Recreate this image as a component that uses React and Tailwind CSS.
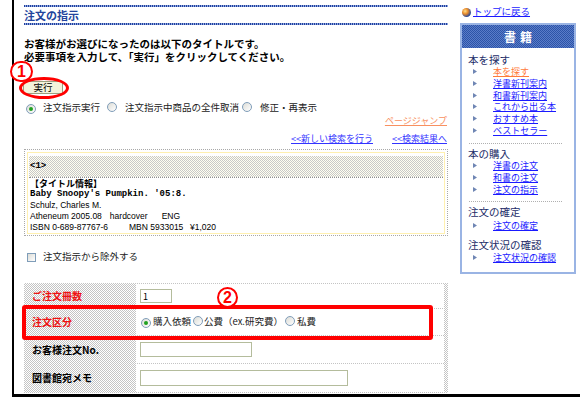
import React from 'react';

// 注文の指示 画面（書籍サイドメニュー付き）

const Radio = ({ checked }) => (
  <span className="inline-flex h-[10px] w-[10px] shrink-0 items-center justify-center rounded-full border border-[#7f9db9] bg-[linear-gradient(135deg,#dcdcd6,#ffffff)]">
    {checked && <span className="h-[4px] w-[4px] rounded-full bg-[#21a121]" />}
  </span>
);

const Bullet = () => (
  <svg width="4" height="5" viewBox="0 0 4 5" className="ml-[5px] shrink-0">
    <polygon points="0,0 4,2.5 0,5" fill="#6f86b4" />
  </svg>
);

const SideLink = ({ children, current }) => (
  <div className="flex h-[11.7px] items-center">
    <Bullet />
    <span className={`ml-[16px] text-[9px] leading-none underline ${current ? 'text-[#ff7a3a]' : 'text-[#1a1aff]'}`}>
      {children}
    </span>
  </div>
);

const SideHead = ({ children, className = '' }) => (
  <div className={`flex h-[11px] items-center text-[10.5px] leading-none ${className}`}>{children}</div>
);

const BlueRule = () => (
  <div className="h-[2px] bg-[image:repeating-linear-gradient(90deg,#1f3f9f_0_1px,#8fa6dc_1px_2px)]" />
);

const FormRow = ({ label, red, height, children }) => (
  <>
    <div className={`flex items-center pl-[7px] text-[10px] font-bold leading-none ${red ? 'text-[#ee1111]' : 'text-black'}`} style={{ height }}>
      {label}
    </div>
    <div className="flex items-center bg-white pl-[4px]">{children}</div>
  </>
);

export default function App() {
  return (
    <div className="relative h-[397px] w-[580px] overflow-hidden bg-white pl-[12px] font-['Noto_Sans_CJK_JP',sans-serif] text-black">
      <div className="flex h-full border-b-[3px] border-l-2 border-black">
        {/* メイン */}
        <main className="w-[438px] shrink-0 pl-[10px] pr-[4px] pt-[5px]">
          <BlueRule />
          <div className="flex h-[16px] items-center text-[11px] font-bold leading-none text-[#23449c]">注文の指示</div>
          <BlueRule />

          <div className="mt-[13px] text-[10.5px] font-bold leading-none">
            <div className="flex h-[13px] items-center">お客様がお選びになったのは以下のタイトルです。</div>
            <div className="flex h-[13px] items-center">必要事項を入力して、「実行」をクリックしてください。</div>
          </div>

          <button className="ml-[-1px] mt-[17px] flex h-[13px] w-[40px] items-center justify-center border border-[#9aa080] bg-[#f3f3dc] text-[9.5px] leading-none">
            実行
          </button>

          <div className="mt-[8px] flex h-[12px] items-center text-[9.5px] leading-none text-[#222]">
            <span className="ml-[2px]"><Radio checked /></span>
            <span className="ml-[7px]">注文指示実行</span>
            <span className="ml-[7px]"><Radio /></span>
            <span className="ml-[8px]">注文指示中商品の全件取消</span>
            <span className="ml-[3px]"><Radio /></span>
            <span className="ml-[8px]">修正・再表示</span>
          </div>

          <div className="flex h-[12px] items-center justify-end pr-[1px] text-[9px] leading-none text-[#f89060] underline">
            ページジャンプ
          </div>

          <div className="mt-[6px] flex h-[12px] items-center justify-end gap-[19px] pr-[1px] text-[9px] leading-none text-[#3333ff] underline">
            <span>&lt;&lt;新しい検索を行う</span>
            <span>&lt;&lt;検索結果へ</span>
          </div>

          {/* タイトル情報 */}
          <div className="mt-[5px] border border-dotted border-[#a8a8a8] p-[2px] pb-[1px]">
            <div className="border border-[#fff0b0] px-[1px] pt-[3px]">
              <div className="flex h-[21px] items-center bg-[image:repeating-conic-gradient(#c8c8c8_0_25%,#fffff0_0_50%)] bg-[length:2px_2px] pl-[1px] font-['Liberation_Mono',monospace] text-[9px] font-bold">
                &lt;1&gt;
              </div>
              <div className="border-t border-dotted border-[#909090] pl-[1px] leading-[11px]">
                <div className="text-[9px] font-bold">【タイトル情報】</div>
                <div className="font-['Liberation_Mono',monospace] text-[9px] font-bold">Baby Snoopy's Pumpkin. '05:8.</div>
                <div className="font-['Liberation_Sans',sans-serif] text-[8.5px]">Schulz, Charles M.</div>
                <div className="flex font-['Liberation_Sans',sans-serif] text-[8.5px]">
                  <span>Atheneum 2005.08</span>
                  <span className="ml-[8px]">hardcover</span>
                  <span className="ml-[14px]">ENG</span>
                </div>
                <div className="flex font-['Liberation_Sans',sans-serif] text-[8.5px]">
                  <span className="w-[99px]">ISBN 0-689-87767-6</span>
                  <span className="w-[61px]">MBN 5933015</span>
                  <span>¥1,020</span>
                </div>
              </div>
            </div>
          </div>

          <div className="mt-[15px] flex h-[12px] items-center text-[9.5px] leading-none text-[#222]">
            <span className="ml-[3px] h-[9px] w-[9px] border border-[#7f9db9] bg-[linear-gradient(135deg,#dcdcd6,#ffffff)]" />
            <span className="ml-[7px]">注文指示から除外する</span>
          </div>

          {/* 注文フォーム */}
          <div className="mt-[20px] bg-[image:repeating-conic-gradient(#c4c4c4_0_25%,#ffffff_0_50%)] bg-[length:2px_2px] p-[1px] pr-[4px]">
            <div className="grid grid-cols-[110px_1fr] gap-[1px]">
              <FormRow label="ご注文冊数" red height={24}>
                <div className="flex h-[14px] w-[32px] items-center border border-[#b4bc9c] pl-[2px] text-[9px] leading-none">1</div>
              </FormRow>
              <FormRow label="注文区分" red height={26}>
                <div className="flex items-center text-[9.5px] leading-none text-[#222]">
                  <span className="ml-[1px]"><Radio checked /></span>
                  <span className="ml-[2px]">購入依頼</span>
                  <span className="ml-[2px]"><Radio /></span>
                  <span className="ml-[1px]">公費（ex.研究費）</span>
                  <span className="ml-[2px]"><Radio /></span>
                  <span className="ml-[2px]">私費</span>
                </div>
              </FormRow>
              <FormRow label="お客様注文No." height={27}>
                <div className="h-[15px] w-[112px] border border-[#b4bc9c]" />
              </FormRow>
              <FormRow label="図書館宛メモ" height={28}>
                <div className="h-[16px] w-[208px] border border-[#b4bc9c]" />
              </FormRow>
            </div>
          </div>
        </main>

        {/* サイドメニュー */}
        <aside className="flex-1 pl-[8px] pt-[6px]">
          <div className="flex h-[12px] items-center pl-[2px]">
            <span className="h-[9px] w-[9px] rounded-full bg-[radial-gradient(circle_at_35%_35%,#ffe08a,#e88a2a_35%,#2a4a9a_70%)]" />
            <span className="ml-[2px] text-[9.5px] leading-none text-[#1a1aff] underline">トップに戻る</span>
          </div>

          <div className="mt-[5px] h-[251px] w-[116px] border-2 border-[#9ab4e4]">
            <div className="flex h-[23px] items-center justify-center bg-[image:repeating-conic-gradient(#2c54a8_0_25%,#5a7cc8_0_50%)] bg-[length:2px_2px] pl-[4px] text-[12px] font-bold leading-none tracking-[4px] text-white">
              書籍
            </div>
            <div className="pl-[6px] pt-[6px] text-[#1c2c68]">
              <SideHead className="h-[12px]">本を探す</SideHead>
              <SideLink current>本を探す</SideLink>
              <SideLink>洋書新刊案内</SideLink>
              <SideLink>和書新刊案内</SideLink>
              <SideLink>これから出る本</SideLink>
              <SideLink>おすすめ本</SideLink>
              <SideLink>ベストセラー</SideLink>

              <div className="ml-[1px] mt-[7px] w-[93px] border-t border-dotted border-[#b0b0b0]" />

              <SideHead className="mt-[5px]">本の購入</SideHead>
              <SideLink>洋書の注文</SideLink>
              <SideLink>和書の注文</SideLink>
              <SideLink>注文の指示</SideLink>

              <div className="ml-[1px] mt-[6px] w-[93px] border-t border-dotted border-[#b0b0b0]" />

              <SideHead className="mt-[5px]">注文の確定</SideHead>
              <div className="mt-[1px]">
                <SideLink>注文の確定</SideLink>
              </div>

              <SideHead className="mt-[9px]">注文状況の確認</SideHead>
              <div className="mt-[1px]">
                <SideLink>注文状況の確認</SideLink>
              </div>
            </div>
          </div>
        </aside>
      </div>

      {/* 注記（赤丸・番号） */}
      <div className="absolute left-[19px] top-[77px] h-[22px] w-[50px] rounded-[50%] border-[3px] border-[#ff0000]" />
      <div className="absolute left-[10px] top-[61px] flex h-[21px] w-[23px] items-center justify-center rounded-full border-2 border-[#ff0000] bg-white font-['Liberation_Sans',sans-serif] text-[16px] font-bold leading-none text-[#ff0000]">
        1
      </div>
      <div className="absolute left-[22px] top-[305px] h-[35px] w-[411px] rounded-[3px] border-[4px] border-[#ff0000]" />
      <div className="absolute left-[217px] top-[287px] flex h-[21px] w-[21px] items-center justify-center rounded-full border-2 border-[#ff0000] bg-white font-['Liberation_Sans',sans-serif] text-[16px] font-bold leading-none text-[#ff0000]">
        2
      </div>
    </div>
  );
}
